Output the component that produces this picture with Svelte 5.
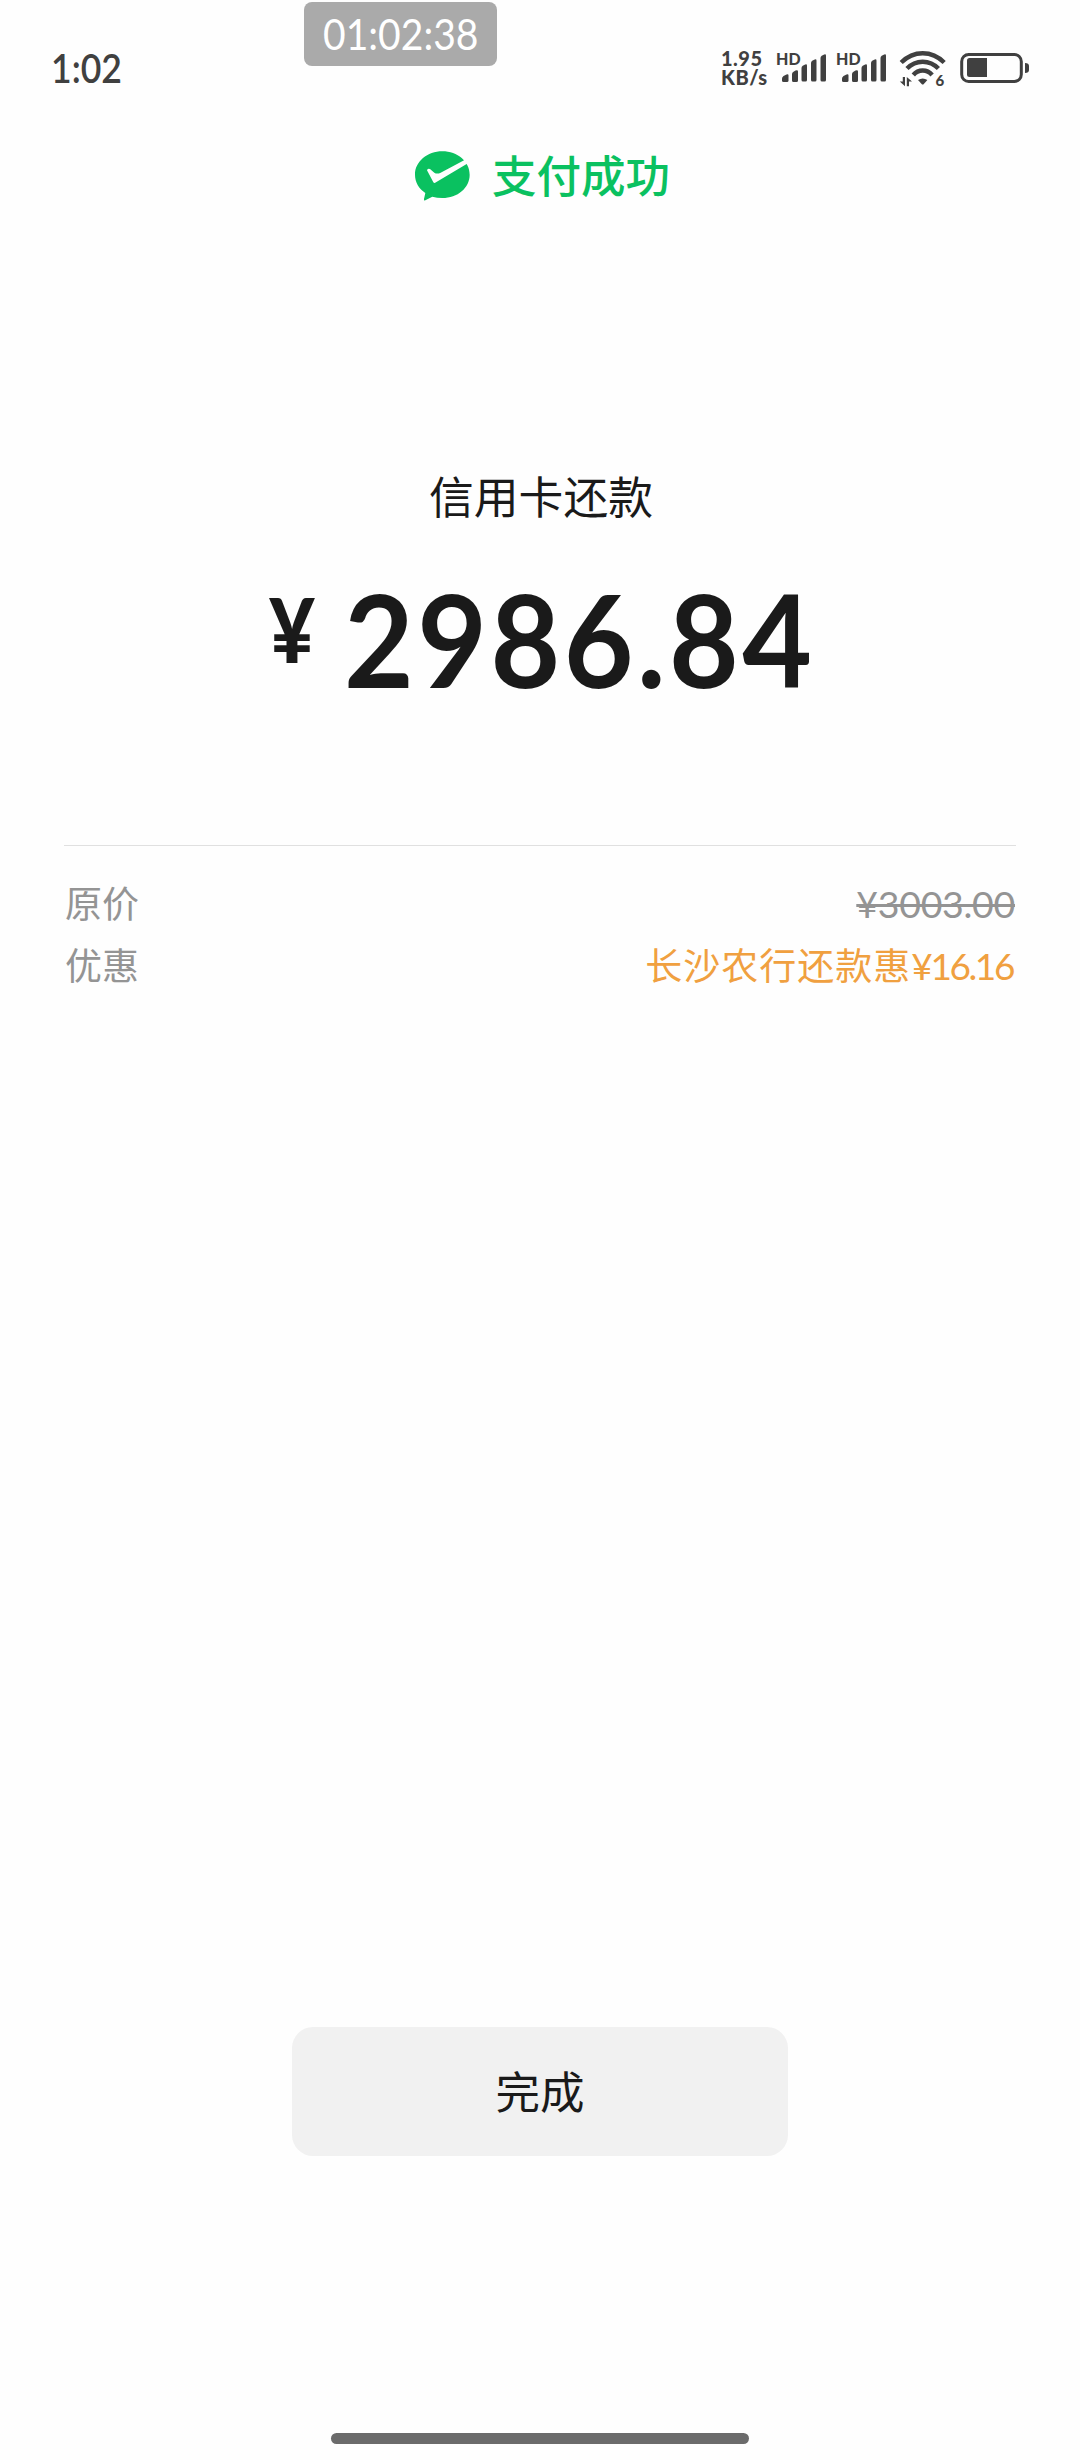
<script lang="ts">
	// Payment result screen: status bar, amount, price breakdown and the done button.
	interface Row {
		label: string;
		value: string;
		amount: string;
		kind: 'original' | 'discount';
	}

	let rows: Row[] = [
		{ label: '原价', value: '', amount: '¥3003.00', kind: 'original' },
		{ label: '优惠', value: '长沙农行还款惠', amount: '¥16.16', kind: 'discount' }
	];
	let sims = [1, 2];
</script>

<div class="screen">
	<header class="status">
		<span class="clock"><span class="fit">1:02</span></span>
		<div class="tray">
			<div class="speed">
				<span>1.95</span>
				<span>KB/s</span>
			</div>
			{#each sims as sim (sim)}
				<div class="sim">
					<span class="hd">HD</span>
					<svg class="bars" viewBox="0 0 44 28">
						<path d="M0 26v-1.500q0-1.500 1.500-2.500l3-1.500q2-1 2 1v5q0 1.500-1.500 1.500h-3.500q-1.500 0-1.500-1.500z" />
						<path d="M10 26v-6q0-1.500 1.500-2.200l2-1.200q2.500-1 2.500 1v8.900q0 1.500-1.500 1.500h-3q-1.500 0-1.500-1.500z" />
						<path d="M19.500 26v-12q0-1.500 1.200-2.200l2-1.100q2.300-1 2.300 1v14.300q0 1.500-1.500 1.500h-2.500q-1.500 0-1.500-1.500z" />
						<path d="M29 26v-17q0-1.500 1.200-2.200l2-1.100q2.300-1 2.300 1v19.300q0 1.500-1.500 1.500h-2.500q-1.500 0-1.500-1.500z" />
						<path d="M38.500 26v-22q0-1.500 1.200-2.200l2-1.100q2.300-1 2.300 1v24.300q0 1.500-1.500 1.500h-2.500q-1.500 0-1.500-1.500z" />
					</svg>
				</div>
			{/each}
			<svg class="wifi" viewBox="0 0 48 36">
				<g fill="none" stroke="#404040" stroke-width="4.400">
					<path d="M2.200 11.500Q11.500 2.200 23.700 2.200T45.200 11.500" />
					<path d="M8 17.600Q14.500 10.700 23.700 10.700T39.400 17.600" />
					<path d="M14.300 24Q18 19.500 23.700 19.500T33.100 24" />
				</g>
				<path d="M19 29q4.700-3.200 9.400 0l-3.600 4q-1.100 1-2.200 0z" />
				<path d="M3.800 26h2.200v9.200l-5.200-4.600h3zM7.800 35.200v-9.200l5.200 4.600h-3v4.600z" />
				<text x="36.600" y="35">6</text>
			</svg>
			<svg class="battery" viewBox="0 0 70 30">
				<rect x="1.700" y="1.500" width="59.600" height="27" rx="7" fill="none" stroke="#404040" stroke-width="3" />
				<path d="M9.500 5h17.500v19h-17.500q-2.500 0-2.500-2.500v-14q0-2.500 2.500-2.500z" />
				<path d="M65 10q4 0 4 3v4q0 3-4 3z" />
			</svg>
		</div>
		<span class="timer"><span class="fit">01:02:38</span></span>
	</header>

	<div class="result">
		<svg class="logo" viewBox="0 0 165 150">
			<path
				fill="#0ac160"
				d="M82 1C128 1 164 32 164 71S128 141 82 141Q66 141 52 137L31 148Q26 150 27 144L31 126C12 113 0 94 0 71C0 32 37 1 82 1z"
			/>
			<path
				fill="#fefefe"
				d="M55 94L36 58Q37 51 45 54L58 65Q66 70 77 65L150 26L160 36L63 94Q58 98 55 94z"
			/>
		</svg>
		<span class="state">支付成功</span>
	</div>

	<main>
		<h1>信用卡还款</h1>
		<div class="total">
			<span class="yen"><span class="fit">¥</span></span>
			<span class="sum"><span class="fit">2986.84</span></span>
		</div>

		<div class="details">
			{#each rows as row (row.label)}
				<div class="row">
					<span>{row.label}</span>
					<span class="value {row.kind}">{row.value}<span class="num">{row.amount}</span></span>
				</div>
			{/each}
		</div>
	</main>

	<button type="button">完成</button>
	<div class="home"></div>
</div>

<style>
	:global(body) {
		background: #fefefe;
	}
	.screen {
		display: flex;
		flex-direction: column;
		align-items: center;
		width: 1080px;
		height: 2460px;
		box-sizing: border-box;
		padding-bottom: 16px;
		background: #fefefe;
		color: #1a1a1a;
		font-family: Lato, 'Noto Sans CJK SC', sans-serif;
	}
	.fit {
		display: inline-block;
		transform-origin: left center;
		white-space: nowrap;
	}
	.status {
		position: relative;
		display: flex;
		justify-content: space-between;
		align-items: center;
		width: 100%;
		height: 136px;
		box-sizing: border-box;
		padding: 0 50px 0 51px;
		color: #404040;
	}
	.clock {
		width: 80px;
		font-size: 40px;
		font-weight: 600;
		line-height: 48px;
	}
	.clock .fit {
		transform: scaleX(0.89);
	}
	.timer {
		position: absolute;
		top: 2px;
		left: 304px;
		width: 193px;
		height: 64px;
		box-sizing: border-box;
		padding-left: 19px;
		border-radius: 8px;
		background: #aaa;
		color: #fff;
		font-size: 42px;
		line-height: 65px;
	}
	.timer .fit {
		transform: scaleX(0.93);
	}
	.tray {
		display: flex;
		align-items: center;
	}
	.tray svg {
		display: block;
		fill: #404040;
	}
	.speed {
		display: flex;
		flex-direction: column;
		width: 55px;
		font-size: 20px;
		font-weight: 900;
		letter-spacing: 0.500px;
		line-height: 19px;
	}
	.sim {
		position: relative;
		width: 60px;
		height: 30px;
	}
	.hd {
		position: absolute;
		top: -2px;
		left: 0;
		font-size: 16px;
		font-weight: 900;
		line-height: 16px;
	}
	.sim .bars {
		width: 44px;
		height: 28px;
		margin: 1px 0 0 6px;
	}
	.wifi {
		width: 48px;
		height: 36px;
		margin: 2px 13px 0 3px;
		overflow: visible;
		font-size: 15px;
		font-weight: 900;
	}
	.battery {
		width: 70px;
		height: 30px;
	}
	.result {
		display: flex;
		align-items: center;
		gap: 22px;
		height: 80px;
		padding-left: 5px;
		color: #0ac160;
		font-size: 44.500px;
		font-weight: 500;
	}
	.state {
		padding-bottom: 6px;
	}
	.logo {
		width: 55px;
		height: 50px;
	}
	main {
		display: flex;
		flex-direction: column;
		align-items: center;
		width: 952px;
		flex: 1;
	}
	h1 {
		margin: 249px 0 0;
		padding-left: 2px;
		font-size: 44.800px;
		font-weight: 400;
		line-height: 64px;
	}
	.total {
		display: flex;
		align-items: flex-start;
		width: 542px;
		height: 160px;
		margin: 45px 0 0;
		font-weight: 700;
	}
	.yen {
		flex: none;
		width: 75px;
		font-size: 90px;
		font-weight: 900;
		line-height: 108px;
	}
	.yen .fit {
		transform: scaleX(0.88);
	}
	.sum {
		font-size: 128px;
		letter-spacing: 3.700px;
		line-height: 130px;
	}
	.sum .fit {
		transform: scaleX(0.94);
	}
	.details {
		width: 100%;
		margin-top: 111px;
		padding-top: 27px;
		border-top: 1px solid #e0e0e0;
	}
	.row {
		display: flex;
		justify-content: space-between;
		height: 62px;
		padding: 0 1px 0 1px;
		color: #949494;
		font-size: 37px;
		line-height: 62px;
	}
	.num {
		font-kerning: none;
	}
	.original {
		text-decoration: line-through;
	}
	.original .num {
		font-size: 37.500px;
		letter-spacing: -0.300px;
	}
	.discount {
		margin-right: 2px;
		color: #f0a040;
		letter-spacing: 1px;
	}
	.discount .num {
		font-size: 37px;
		letter-spacing: -2.400px;
	}
	button {
		width: 496px;
		height: 129px;
		margin-bottom: 277px;
		padding: 0 0 4px;
		border: 0;
		border-radius: 21px;
		background: #f1f1f1;
		color: #1a1a1a;
		font: 400 44.500px 'Noto Sans CJK SC', sans-serif;
	}
	.home {
		width: 418px;
		height: 11px;
		border-radius: 6px;
		background: #6b6b6b;
	}
</style>
